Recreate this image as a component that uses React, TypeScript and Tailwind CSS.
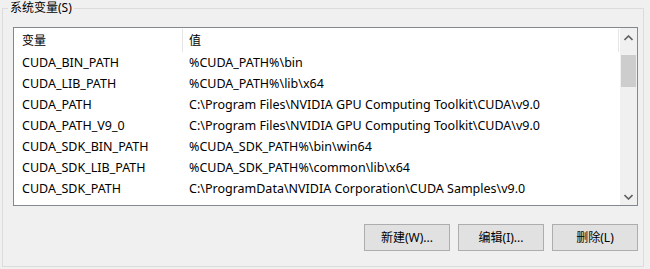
const rows: [string, string][] = [
  ['CUDA_BIN_PATH', '%CUDA_PATH%\\bin'],
  ['CUDA_LIB_PATH', '%CUDA_PATH%\\lib\\x64'],
  ['CUDA_PATH', 'C:\\Program Files\\NVIDIA GPU Computing Toolkit\\CUDA\\v9.0'],
  ['CUDA_PATH_V9_0', 'C:\\Program Files\\NVIDIA GPU Computing Toolkit\\CUDA\\v9.0'],
  ['CUDA_SDK_BIN_PATH', '%CUDA_SDK_PATH%\\bin\\win64'],
  ['CUDA_SDK_LIB_PATH', '%CUDA_SDK_PATH%\\common\\lib\\x64'],
  ['CUDA_SDK_PATH', 'C:\\ProgramData\\NVIDIA Corporation\\CUDA Samples\\v9.0'],
];

const font = { fontFamily: '"Noto Sans", "Noto Sans CJK SC", sans-serif' };

function Chevron({ up }: { up?: boolean }) {
  return (
    <svg width="9" height="6" viewBox="0 0 9 6">
      <path
        d={up ? 'M0.5 5 L4.5 1 L8.5 5' : 'M0.5 1 L4.5 5 L8.5 1'}
        fill="none"
        stroke="#606060"
        strokeWidth="1.6"
      />
    </svg>
  );
}

function Btn({ label }: { label: string }) {
  return (
    <button className="w-[86px] h-[27px] bg-[#e1e1e1] border border-[#adadad] text-[12px] text-black flex items-center justify-center">
      {label}
    </button>
  );
}

export default function App() {
  return (
    <div className="w-[650px] h-[269px] bg-[#f0f0f0] pt-[8px] pl-[2px]" style={font}>
      <div className="relative w-[642px] h-[259px] border border-[#dcdcdc] pl-[10px] pt-[18px]">
        <span className="absolute left-[5px] top-[-9px] bg-[#f0f0f0] px-[2px] text-[12px] leading-[16px] text-black">
          系统变量(S)
        </span>
        <div className="w-[625px] h-[179px] border border-[#828790] bg-white flex">
          <div className="flex-1 flex flex-col">
            <div className="h-[25px] flex text-[12px] text-black">
              <div className="w-[168px] pl-[8px] flex items-center mt-[1px]">变量</div>
              <div className="w-px h-[23px] mt-[1px] bg-[#e5e5e5]" />
              <div className="w-[435px] pl-[6px] flex items-center mt-[1px]">值</div>
              <div className="w-px h-[23px] mt-[1px] bg-[#e5e5e5]" />
            </div>
            {rows.map(([k, v]) => (
              <div key={k} className="h-[21px] flex items-center text-[12.5px] text-black whitespace-nowrap">
                <div className="w-[175px] pl-[8px]">{k}</div>
                <div>{v}</div>
              </div>
            ))}
          </div>
          <div className="w-[17px] bg-[#f0f0f0] flex flex-col items-center">
            <div className="h-[17px] w-full flex items-center justify-center mt-[1px]">
              <Chevron up />
            </div>
            <div className="w-[15px] h-[32px] bg-[#cdcdcd] mt-[9px]" />
            <div className="flex-1" />
            <div className="h-[17px] w-full flex items-center justify-center">
              <Chevron />
            </div>
          </div>
        </div>
        <div className="w-[625px] flex justify-end gap-[8px] mt-[18px]">
          <Btn label="新建(W)..." />
          <Btn label="编辑(I)..." />
          <Btn label="删除(L)" />
        </div>
      </div>
    </div>
  );
}
